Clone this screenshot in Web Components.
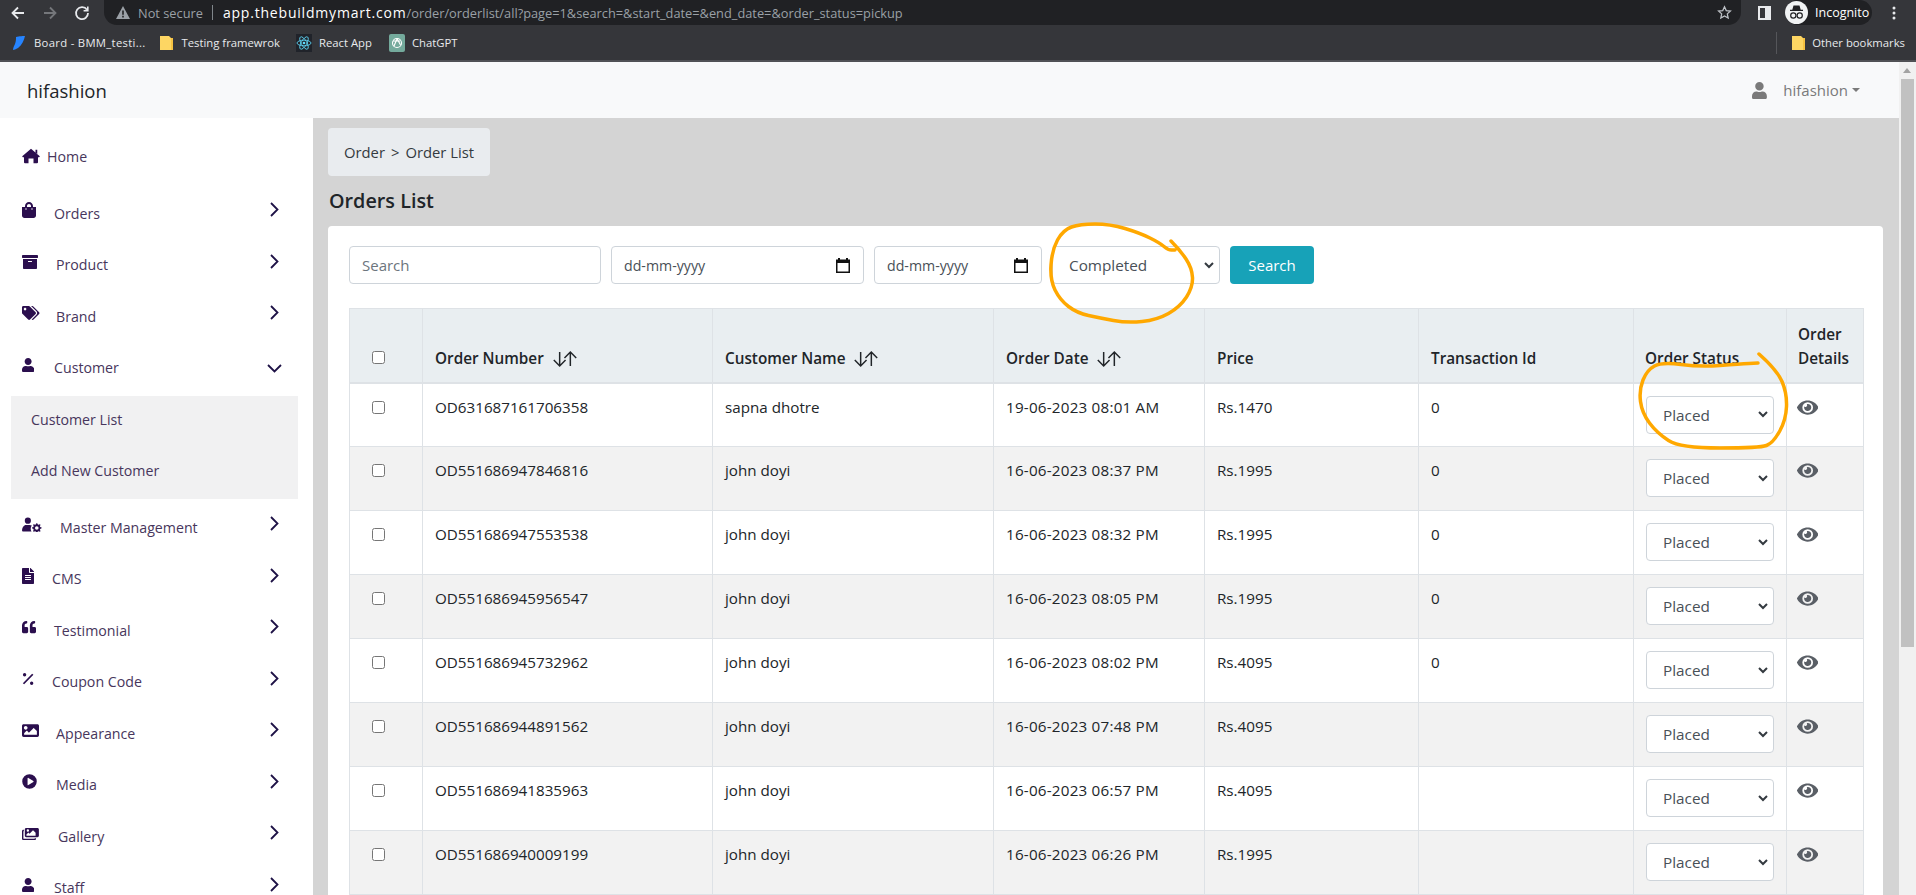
<!DOCTYPE html>
<html lang="en">
<head>
<meta charset="utf-8">
<title>Orders List</title>
<style>
html, body { margin: 0; height: 895px; overflow: hidden; background: #fff; font-family: "Open Sans", "Liberation Sans", sans-serif; font-size: 15px; color: #212529; }
#app-row { display: flex; height: 833px; }
#page { flex: 1; min-width: 0; display: flex; flex-direction: column; }
#page-body { flex: 1; display: flex; min-height: 0; }
</style>
</head>
<body>
<browser-chrome></browser-chrome>
<div id="app-row">
  <div id="page">
    <app-navbar brand="hifashion" account="hifashion"></app-navbar>
    <div id="page-body">
      <side-nav></side-nav>
      <orders-page></orders-page>
    </div>
  </div>
  <page-scrollbar></page-scrollbar>
</div>
<ink-marks></ink-marks>

<script>
// gear for the user-cog icon, 8 teeth round (cx, cy) with a hole
function gearPath(cx, cy, r, hole) {
    let d = '';
    for (let i = 0; i < 16; i++) {
        const rad = i % 2 == 0 ? r : r * 0.74;
        [-0.2, 0.2].forEach(off => {
            const a = (i + off) * Math.PI / 8;
            d += (d ? 'L' : 'M') + (cx + rad * Math.cos(a)).toFixed(1) + ' ' + (cy + rad * Math.sin(a)).toFixed(1);
        });
    }
    return d + `zM${cx - hole} ${cy}a${hole} ${hole} 0 1 0 ${hole * 2} 0a${hole} ${hole} 0 1 0 ${-hole * 2} 0z`;
}

// font awesome style glyphs, [viewBox width, path]
const ICONS = {
    home: [576, 'M288 24L560 256a24 24 0 0 1-16 42H512V456a32 32 0 0 1-32 32H368V336H208V488H96a32 32 0 0 1-32-32V298H32a24 24 0 0 1-16-42zM432 56h56V200l-56-48z'],
    bag: [448, 'M352 160v-32C352 57.42 294.579 0 224 0 153.42 0 96 57.42 96 128v32H0v272c0 44.183 35.817 80 80 80h288c44.183 0 80-35.817 80-80V160h-96zm-192-32c0-35.29 28.71-64 64-64s64 28.71 64 64v32H160v-32zm160 120c-13.255 0-24-10.745-24-24s10.745-24 24-24 24 10.745 24 24-10.745 24-24 24zm-192 0c-13.255 0-24-10.745-24-24s10.745-24 24-24 24 10.745 24 24-10.745 24-24 24z'],
    archive: [512, 'M32 448c0 17.7 14.3 32 32 32h384c17.7 0 32-14.3 32-32V160H32v288zm160-212c0-6.6 5.4-12 12-12h104c6.6 0 12 5.4 12 12v8c0 6.6-5.4 12-12 12H204c-6.6 0-12-5.4-12-12v-8zM480 32H32C14.3 32 0 46.3 0 64v48c0 8.8 7.2 16 16 16h480c8.8 0 16-7.2 16-16V64c0-17.7-14.3-32-32-32z'],
    tags: [640, 'M497.941 225.941L286.059 14.059A48 48 0 0 0 252.118 0H48C21.49 0 0 21.49 0 48v204.118a48 48 0 0 0 14.059 33.941l211.882 211.882c18.744 18.745 49.136 18.746 67.882 0l204.118-204.118c18.745-18.745 18.745-49.137 0-67.882zM112 160c-26.51 0-48-21.49-48-48s21.49-48 48-48 48 21.49 48 48-21.49 48-48 48zm513.941 133.823L421.823 497.941c-18.745 18.745-49.137 18.745-67.882 0l-.36-.36L527.64 323.522c16.999-16.999 26.36-39.6 26.36-63.64s-9.362-46.641-26.36-63.64L331.397 0h48.721a48 48 0 0 1 33.941 14.059l211.882 211.882c18.745 18.745 18.745 49.137 0 67.882z'],
    user: [448, 'M224 256c70.7 0 128-57.3 128-128S294.7 0 224 0 96 57.3 96 128s57.3 128 128 128zm89.6 32h-16.7c-22.2 10.2-46.9 16-72.9 16s-50.6-5.8-72.9-16h-16.7C60.2 288 0 348.2 0 422.4V464c0 26.5 21.5 48 48 48h352c26.5 0 48-21.5 48-48v-41.6c0-74.2-60.2-134.4-134.4-134.4z'],
    usercog: [680, 'M200 20a105 105 0 1 1 0 210 105 105 0 1 1 0-210zM140 270h120c30 0 55 8 75 20-24 30-38 68-38 110 0 36 10 68 28 96H30c-16 0-28-12-28-28 0-110 60-198 138-198z' + gearPath(505, 375, 165, 62)],
    file: [384, 'M224 136V0H24C10.7 0 0 10.7 0 24v464c0 13.3 10.7 24 24 24h336c13.3 0 24-10.7 24-24V160H248c-13.2 0-24-10.8-24-24zm64 236c0 6.6-5.4 12-12 12H108c-6.6 0-12-5.4-12-12v-8c0-6.6 5.4-12 12-12h168c6.6 0 12 5.4 12 12v8zm0-64c0 6.6-5.4 12-12 12H108c-6.6 0-12-5.4-12-12v-8c0-6.6 5.4-12 12-12h168c6.6 0 12 5.4 12 12v8zm0-72v8c0 6.6-5.4 12-12 12H108c-6.6 0-12-5.4-12-12v-8c0-6.6 5.4-12 12-12h168c6.6 0 12 5.4 12 12zm96-114.1v6.1H256V0h6.1c6.4 0 12.5 2.5 17 7l97.9 98c4.5 4.5 7 10.6 7 16.9z'],
    quote: [512, 'M464 256h-80v-64c0-35.3 28.7-64 64-64h8c13.3 0 24-10.7 24-24V56c0-13.3-10.7-24-24-24h-8c-88.4 0-160 71.6-160 160v240c0 26.5 21.5 48 48 48h128c26.5 0 48-21.5 48-48V304c0-26.5-21.5-48-48-48zm-288 0H96v-64c0-35.3 28.7-64 64-64h8c13.3 0 24-10.7 24-24V56c0-13.3-10.7-24-24-24h-8C71.6 32 0 103.6 0 192v240c0 26.5 21.5 48 48 48h128c26.5 0 48-21.5 48-48V304c0-26.5-21.5-48-48-48z'],
    percent: [448, 'M95 40a62 62 0 1 1 0 124 62 62 0 1 1 0-124zM353 348a62 62 0 1 1 0 124 62 62 0 1 1 0-124zM370 62l48 40L78 450l-48-40z'],
    image: [512, 'M464 448H48c-26.51 0-48-21.49-48-48V112c0-26.51 21.49-48 48-48h416c26.51 0 48 21.49 48 48v288c0 26.51-21.49 48-48 48zM112 120c-30.928 0-56 25.072-56 56s25.072 56 56 56 56-25.072 56-56-25.072-56-56-56zM64 384h384V272l-87.515-87.515c-4.686-4.686-12.284-4.686-16.971 0L208 320l-55.515-55.515c-4.686-4.686-12.284-4.686-16.971 0L64 336v48z'],
    play: [512, 'M256 8a248 248 0 1 0 0 496 248 248 0 1 0 0-496zM190 148c0-14 15-23 28-15l170 108c12 7 12 23 0 30L218 379c-13 8-28-1-28-15z'],
    images: [576, 'M480 416v16c0 26.51-21.49 48-48 48H48c-26.51 0-48-21.49-48-48V176c0-26.51 21.49-48 48-48h16v48H54a6 6 0 0 0-6 6v244a6 6 0 0 0 6 6h372a6 6 0 0 0 6-6v-10h48zm48-352H144c-26.51 0-48 21.49-48 48v224c0 26.51 21.49 48 48 48h384c26.51 0 48-21.49 48-48V112c0-26.51-21.49-48-48-48zM200 112a40 40 0 1 1 0 80 40 40 0 1 1 0-80zM152 336v-48l64-64 40 40 120-120 88 88v104z'],
    eye: [576, 'M572.52 241.4C518.29 135.59 410.93 64 288 64S57.68 135.64 3.48 241.41a32.4 32.4 0 0 0 0 29.2C57.71 376.41 165.07 448 288 448s230.32-71.64 284.52-177.41a32.4 32.4 0 0 0 0-29.19zM288 400a144 144 0 1 1 144-144 143.93 143.93 0 0 1-144 144zm0-240a95.31 95.31 0 0 0-25.31 3.79 47.85 47.85 0 0 1-66.9 66.9A95.78 95.78 0 1 0 288 160z']
};

function iconSvg(name, height) {
    const ic = ICONS[name];
    const w = ic[0] / 512 * height;
    return `<svg width="${w}" height="${height}" viewBox="0 0 ${ic[0]} 512" fill="currentColor" fill-rule="evenodd"><path d="${ic[1]}"/></svg>`;
}

class BrowserChrome extends HTMLElement {
    connectedCallback() {
        const root = this.attachShadow({ mode: 'open' });
        root.innerHTML = `<style>
            :host { display: block; height: 62px; background: #35363a; color: #e8eaed; font-family: "Open Sans", "Liberation Sans", sans-serif; overflow: hidden; }
            .top { height: 25px; display: flex; align-items: center; }
            .nav { width: 104px; flex: none; display: flex; align-items: center; padding-left: 10px; gap: 16px; box-sizing: border-box; }
            .omni { width: 1637px; flex: none; height: 25px; background: #202124; border-radius: 0 0 13px 13px; display: flex; align-items: center; box-sizing: border-box; padding-left: 12px; font-size: 12.800px; color: #9aa0a6; white-space: nowrap; }
            .sep { width: 1px; height: 15px; background: #80868b; margin: 0 10px 0 9px; }
            .host { color: #fff; font-size: 14px; letter-spacing: .8px; }
            .warn { margin-right: 8px; display: block; }
            .star { margin-left: auto; margin-right: 9px; display: block; }
            .tools { flex: 1; display: flex; align-items: center; }
            .panel { margin-left: 17px; display: block; }
            .pill { margin-left: 14px; height: 25px; width: 87px; border-radius: 13px; background: #202124; display: flex; align-items: center; gap: 7px; box-sizing: border-box; font-size: 12.500px; color: #fff; }
            .dots { margin-left: 20px; display: block; }
            .marks { height: 35px; display: flex; align-items: center; font-size: 11.300px; color: #e8eaed; padding-left: 11px; white-space: nowrap; border-bottom: 2px solid #505155; box-sizing: content-box; }
            .bm { display: flex; align-items: center; gap: 7px; }
            .first span { letter-spacing: .3px; }
            .folder { margin-left: 14px; gap: 9px; }
            .react { margin-left: 16px; gap: 7px; }
            .gpt { margin-left: 17px; gap: 7px; }
            .other { margin-left: auto; margin-right: 11px; gap: 7px; }
            .rule { width: 1px; height: 22px; background: #55565a; margin-right: 8px; }
        </style>
        <div class="top">
            <div class="nav">
                <svg width="16" height="16" viewBox="0 0 16 16" fill="none" stroke="#e8eaed" stroke-width="1.8"><path d="M14 8H2.5M8 2.5 2.5 8 8 13.5"/></svg>
                <svg width="16" height="16" viewBox="0 0 16 16" fill="none" stroke="#75777b" stroke-width="1.8"><path d="M2 8h11.5M8 2.5 13.5 8 8 13.5"/></svg>
                <svg width="16" height="16" viewBox="0 0 16 16" fill="none" stroke="#e8eaed" stroke-width="1.8"><path d="M13 4.8A6 6 0 1 0 14 8"/><path d="M13.8 1.5v4.2H9.6" stroke-width="1.6"/></svg>
            </div>
            <div class="omni">
                <svg class="warn" width="14" height="13" viewBox="0 0 14 13"><path fill="#9aa0a6" d="M7 0 14 13H0zM6.2 4.5v4.3h1.6V4.5zM6.2 9.8v1.6h1.6V9.8z" fill-rule="evenodd"/></svg>
                <span>Not secure</span><span class="sep"></span><span><span class="host">app.thebuildmymart.com</span>/order/orderlist/all?page=1&amp;search=&amp;start_date=&amp;end_date=&amp;order_status=pickup</span>
                <svg class="star" width="15" height="15" viewBox="0 0 24 24" fill="none" stroke="#bdc1c6" stroke-width="2"><path d="M12 2.8l2.8 6.2 6.7.7-5 4.500 1.400 6.600-5.900-3.400-5.900 3.400 1.400-6.600-5-4.500 6.700-.7z"/></svg>
            </div>
            <div class="tools">
                <svg class="panel" width="13" height="14" viewBox="0 0 13 14"><path fill="#e8eaed" d="M0 0h13v14H0zM2 2v10h5V2z" fill-rule="evenodd"/></svg>
                <div class="pill">
                    <svg width="23" height="23" viewBox="0 0 23 23"><circle cx="11.500" cy="11.500" r="11.500" fill="#f1f3f4"/><path fill="#202124" d="M8.500 4.500h6l1.200 4.200H18v1.200H5V8.700h2.300z"/><circle cx="8.300" cy="14.500" r="2.600" fill="none" stroke="#202124" stroke-width="1.200"/><circle cx="14.700" cy="14.500" r="2.600" fill="none" stroke="#202124" stroke-width="1.200"/></svg>
                    <span>Incognito</span>
                </div>
                <svg class="dots" width="4" height="14" viewBox="0 0 4 14" fill="#e8eaed"><circle cx="2" cy="2" r="1.500"/><circle cx="2" cy="7" r="1.500"/><circle cx="2" cy="12" r="1.500"/></svg>
            </div>
        </div>
        <div class="marks">
            <div class="bm first"><svg width="16" height="16" viewBox="0 0 16 16"><path fill="#2684ff" d="M5 2c3-1 8-1 9-1-1 4-3 9-7 12-2 1-4 2-5 2 0-2 1-4 2-6 1-3 1-5 1-7z"/></svg><span>Board - BMM_testi...</span></div>
            <div class="bm folder"><svg width="13" height="16" viewBox="0 0 13 16"><path fill="#fdd663" d="M0 1h9l2 2v12H0z"/><path fill="#f5c242" d="M11 3h2v12h-2z"/></svg><span>Testing framewrok</span></div>
            <div class="bm react"><svg width="16" height="18" viewBox="0 0 16 18"><rect width="16" height="18" fill="#20232a"/><g fill="none" stroke="#61dafb" stroke-width=".8"><ellipse cx="8" cy="9" rx="7" ry="2.800"/><ellipse cx="8" cy="9" rx="7" ry="2.800" transform="rotate(60 8 9)"/><ellipse cx="8" cy="9" rx="7" ry="2.800" transform="rotate(120 8 9)"/></g><circle cx="8" cy="9" r="1.300" fill="#61dafb"/></svg><span>React App</span></div>
            <div class="bm gpt"><svg width="16" height="18" viewBox="0 0 16 18"><rect width="16" height="18" rx="2" fill="#74aa9c"/><g fill="none" stroke="#fff" stroke-width="1.100"><circle cx="8" cy="9" r="4.500"/><path d="M8 4.500 11.500 11M4 7l7 0M5 12l3-7"/></g></svg><span>ChatGPT</span></div>
            <div class="bm other"><span class="rule"></span><svg width="13" height="16" viewBox="0 0 13 16"><path fill="#fdd663" d="M0 1h9l2 2v12H0z"/><path fill="#f5c242" d="M11 3h2v12h-2z"/></svg><span>Other bookmarks</span></div>
        </div>`;
    }
}
customElements.define('browser-chrome', BrowserChrome);

class AppNavbar extends HTMLElement {
    connectedCallback() {
        const root = this.attachShadow({ mode: 'open' });
        root.innerHTML = `<style>
            :host { display: flex; flex: none; height: 56px; background: #f8f9fa; align-items: center; justify-content: space-between; padding: 0 39px 0 27px; font-size: 15px; }
            .brand { font-size: 18.500px; color: #212529; }
            .who { display: flex; align-items: center; color: #7a7a7a; }
            .who svg { display: block; margin-right: 16px; }
            .caret { width: 0; height: 0; border: 4px solid transparent; border-top-color: #7a7a7a; border-bottom: 0; margin-left: 4px; }
        </style>
        <span class="brand">${this.getAttribute('brand')}</span>
        <span class="who">${iconSvg('user', 17)}<span>${this.getAttribute('account')}</span><span class="caret"></span></span>`;
    }
}
customElements.define('app-navbar', AppNavbar);

class NavItem extends HTMLElement {
    connectedCallback() {
        const chevron = this.getAttribute('chevron');
        const root = this.attachShadow({ mode: 'open' });
        let arrow = '';
        if (chevron == 'right') {
            arrow = '<svg class="arrow" width="9" height="15" viewBox="0 0 9 15" fill="none" stroke="#1e1246" stroke-width="1.800"><path d="M1 1l6.500 6.500L1 14"/></svg>';
        } else if (chevron == 'down') {
            arrow = '<svg class="arrow down" width="15" height="9" viewBox="0 0 15 9" fill="none" stroke="#1e1246" stroke-width="1.800"><path d="M1 1l6.500 6.500L14 1"/></svg>';
        }
        const raised = this.hasAttribute('level') ? '0' : '6px';
        root.innerHTML = `<style>
            :host { display: block; }
            .row { height: var(--row, 51.500px); display: flex; align-items: center; position: relative; padding-left: 22px; color: #47365c; }
            .ic { width: ${this.getAttribute('text-at') - 22}px; flex: none; color: #2b0f4e; margin-bottom: ${raised}; display: block; }
            .ic svg { display: block; }
            .arrow { position: absolute; left: 270px; top: calc(50% - 11px); display: block; }
            .arrow.down { left: 267px; top: calc(50% - 4px); }
        </style>
        <div class="row"><span class="ic">${iconSvg(this.getAttribute('icon'), +this.getAttribute('size') || 15)}</span><span><slot></slot></span>${arrow}</div>`;
    }
}
customElements.define('nav-item', NavItem);

class SideNav extends HTMLElement {
    connectedCallback() {
        const root = this.attachShadow({ mode: 'open' });
        const top = [['bag', 54, 'Orders', 16], ['archive', 56, 'Product', 16], ['tags', 56, 'Brand', 14], ['user', 54, 'Customer', 14]];
        const rest = [['usercog', 60, 'Master Management', 15], ['file', 52, 'CMS', 16], ['quote', 54, 'Testimonial', 14], ['percent', 52, 'Coupon Code', 14], ['image', 56, 'Appearance', 17], ['play', 56, 'Media', 15], ['images', 58, 'Gallery', 15], ['user', 54, 'Staff', 14]];
        const item = (it, chev) => `<nav-item icon="${it[0]}" text-at="${it[1]}" size="${it[3] || 15}" chevron="${chev}">${it[2]}</nav-item>`;
        root.innerHTML = `<style>
            :host { display: block; width: 313px; flex: none; background: #fff; padding-top: 10px; box-sizing: border-box; overflow: hidden; font-size: 14.200px; }
            .home { --row: 56px; margin-bottom: 3.250px; }
            .sub { margin: 2.750px 15px 2.250px 11px; background: #f1f1f2; padding: 1px 0 4.750px 20px; color: #47365c; display: flex; flex-direction: column; gap: 5.250px; }
            .sub span { height: 46px; line-height: 46px; display: block; }
        </style>
        <nav-item class="home" icon="home" text-at="47" size="16" level="0">Home</nav-item>
        ${top.map((it, i) => item(it, i == 3 ? 'down' : 'right')).join('')}
        <div class="sub"><span>Customer List</span><span>Add New Customer</span></div>
        ${rest.map(it => item(it, 'right')).join('')}`;
    }
}
customElements.define('side-nav', SideNav);

class FormField extends HTMLElement {
    connectedCallback() {
        const kind = this.getAttribute('kind');
        const root = this.attachShadow({ mode: 'open' });
        let tail = '';
        if (kind == 'date') {
            tail = '<svg width="14" height="15" viewBox="0 0 14 15"><path fill="#111" d="M2 0h2v1.500h6V0h2v1.500h2V15H0V1.500h2zM1.500 5v8.500h11V5z" fill-rule="evenodd"/></svg>';
        } else if (kind == 'select') {
            tail = '<svg width="10" height="7" viewBox="0 0 10 7" fill="none" stroke="#343a40" stroke-width="2"><path d="M1 1l4 4 4-4"/></svg>';
        }
        root.innerHTML = `<style>
            :host { display: flex; box-sizing: border-box; height: 38px; align-items: center; justify-content: space-between; background: #fff; border: 1px solid #ced4da; border-radius: 4px; font-size: 15px; color: #6c757d; padding: 0 9px 0 12px; white-space: nowrap; flex: none; }
            :host([kind=select]) { color: #495057; padding: 0 5px 0 var(--pad, 16px); font-size: 15.300px; }
            :host([kind=date]) { color: #495057; padding-right: 13px; font-size: 14.200px; }
            svg { display: block; flex: none; }
        </style><span><slot></slot></span>${tail}`;
    }
}
customElements.define('form-field', FormField);

class OrdersTable extends HTMLElement {
    connectedCallback() {
        const rows = [
            ['OD631687161706358', 'sapna dhotre', '19-06-2023 08:01 AM', 'Rs.1470', '0'],
            ['OD551686947846816', 'john doyi', '16-06-2023 08:37 PM', 'Rs.1995', '0'],
            ['OD551686947553538', 'john doyi', '16-06-2023 08:32 PM', 'Rs.1995', '0'],
            ['OD551686945956547', 'john doyi', '16-06-2023 08:05 PM', 'Rs.1995', '0'],
            ['OD551686945732962', 'john doyi', '16-06-2023 08:02 PM', 'Rs.4095', '0'],
            ['OD551686944891562', 'john doyi', '16-06-2023 07:48 PM', 'Rs.4095', ''],
            ['OD551686941835963', 'john doyi', '16-06-2023 06:57 PM', 'Rs.4095', ''],
            ['OD551686940009199', 'john doyi', '16-06-2023 06:26 PM', 'Rs.1995', '']
        ];
        const sort = '<svg class="sort" width="26" height="16" viewBox="0 0 24 15" fill="none" stroke="#212529" stroke-width="1.400"><path d="M7 1v13M1.500 8.500 7 14l5.500-5.500M17 14V1M11.500 6.500 17 1l5.500 5.500"/></svg>';
        const widths = [73, 290, 281, 211, 214, 215, 153, 77];
        const root = this.attachShadow({ mode: 'open' });
        root.innerHTML = `<style>
            :host { display: block; font-size: 15.200px; color: #212529; }
            table { border-collapse: collapse; table-layout: fixed; width: 1514px; }
            th, td { border: 1px solid #dee2e6; padding: 12px; text-align: left; vertical-align: top; line-height: 24px; box-sizing: border-box; }
            th { background: #e9eef1; vertical-align: bottom; border-bottom-width: 2px; font-weight: 600; height: 74px; font-size: 15.300px; }
            thead tr { height: 74px; }
            th:nth-child(n+7), td:nth-child(n+7) { padding-left: 11px; padding-right: 9px; }
            td { height: 64px; padding-top: 11px; }
            td:nth-child(4) { letter-spacing: .22px; }
            tbody tr:nth-child(even) { background: #f2f2f2; }
            .sort { vertical-align: -3px; margin-left: 4px; }
            .box { margin: 0 0 0 10px; width: 13px; height: 13px; display: block; }
            th .box { margin-bottom: 6px; margin-top: 0; }
            td .box { margin-top: 6px; }
            form-field { width: 128px; margin-left: 1px; }
            td.st { padding-top: 12px; padding-bottom: 0; }
            .eye { color: #5a5f66; display: block; padding-top: 3px; margin-left: -1px; }
            .eye svg { display: block; }
        </style>
        <table>
            <colgroup>${widths.map(w => `<col style="width:${w}px">`).join('')}</colgroup>
            <thead><tr>
                <th><input type="checkbox" class="box"></th>
                <th>Order Number ${sort}</th>
                <th>Customer Name ${sort}</th>
                <th>Order Date ${sort}</th>
                <th>Price</th>
                <th>Transaction Id</th>
                <th>Order Status</th>
                <th>Order Details</th>
            </tr></thead>
            <tbody>${rows.map(r => `<tr>
                <td><input type="checkbox" class="box"></td>
                ${r.map(c => `<td>${c}</td>`).join('')}
                <td class="st"><form-field kind="select">Placed</form-field></td>
                <td><span class="eye">${iconSvg('eye', 19)}</span></td>
            </tr>`).join('')}</tbody>
        </table>`;
    }
}
customElements.define('orders-table', OrdersTable);

class OrdersPage extends HTMLElement {
    connectedCallback() {
        const root = this.attachShadow({ mode: 'open' });
        root.innerHTML = `<style>
            :host { display: block; flex: 1; min-width: 0; background: #d4d4d4; padding: 10px 16px 0 15px; box-sizing: border-box; overflow: hidden; }
            .crumb { display: inline-block; height: 48px; line-height: 48px; padding: 0 16px; background: #e9ecef; border-radius: 4px; font-size: 14.800px; color: #343a40; }
            .crumb i { font-style: normal; margin: 0 6px; }
            h1 { margin: 11px 0 11px 1px; font-size: 19.800px; font-weight: 600; line-height: 28px; color: #212529; }
            .card { background: #fff; border-radius: 4px 4px 0 0; padding: 20px 20px 0 21px; height: 700px; box-sizing: border-box; }
            .filters { display: flex; gap: 10px; margin-bottom: 24px; }
            .btn { width: 84px; height: 38px; line-height: 38px; text-align: center; background: #17a2b8; color: #fff; border-radius: 4px; font-size: 15px; flex: none; }
        </style>
        <div class="crumb">Order<i>&gt;</i>Order List</div>
        <h1>Orders List</h1>
        <div class="card">
            <div class="filters">
                <form-field style="width:252px">Search</form-field>
                <form-field kind="date" style="width:253px">dd-mm-yyyy</form-field>
                <form-field kind="date" style="width:168px">dd-mm-yyyy</form-field>
                <form-field kind="select" style="width:168px">Completed</form-field>
                <div class="btn">Search</div>
            </div>
            <orders-table></orders-table>
        </div>`;
    }
}
customElements.define('orders-page', OrdersPage);

class PageScrollbar extends HTMLElement {
    connectedCallback() {
        const root = this.attachShadow({ mode: 'open' });
        root.innerHTML = `<style>
            :host { display: block; width: 17px; flex: none; background: #f1f1f1; position: relative; }
            .up { width: 0; height: 0; border: 4px solid transparent; border-bottom: 5px solid #a3a3a3; border-top: 0; position: absolute; left: 4px; top: 6px; }
            .thumb { position: absolute; left: 2px; width: 13px; top: 17px; height: 568px; background: #c1c1c1; }
        </style><div class="up"></div><div class="thumb"></div>`;
    }
}
customElements.define('page-scrollbar', PageScrollbar);

// the orange pen marks drawn on the screenshot
class InkMarks extends HTMLElement {
    smooth(pts) {
        let d = 'M' + pts[0].join(' ');
        for (let i = 1; i < pts.length - 1; i++) {
            const mx = (pts[i][0] + pts[i + 1][0]) / 2, my = (pts[i][1] + pts[i + 1][1]) / 2;
            d += ` Q${pts[i][0]} ${pts[i][1]} ${mx} ${my}`;
        }
        return d + ' L' + pts[pts.length - 1].join(' ');
    }
    connectedCallback() {
        const a = [[1171, 241], [1180, 250], [1192, 268], [1193, 287], [1180, 307], [1157, 320], [1127, 323], [1100, 318], [1077, 313], [1060, 300], [1050, 280], [1052, 250], [1063, 230], [1080, 224], [1110, 224], [1140, 233], [1160, 243], [1168, 250], [1175, 250]];
        const b = [[1759, 354], [1777, 370], [1787, 393], [1786, 420], [1773, 443], [1760, 448], [1680, 448], [1657, 433], [1642, 413], [1639, 390], [1647, 370], [1662, 362], [1700, 367], [1740, 364], [1758, 363]];
        const root = this.attachShadow({ mode: 'open' });
        root.innerHTML = `<style>
            :host { position: absolute; left: 0; top: 0; width: 1916px; height: 895px; pointer-events: none; }
            svg { display: block; }
        </style>
        <svg width="1916" height="895" fill="none" stroke="#ffa800" stroke-width="3.500" stroke-linecap="round" stroke-linejoin="round">
            <path d="${this.smooth(a)}"/><path d="${this.smooth(b)}"/>
        </svg>`;
    }
}
customElements.define('ink-marks', InkMarks);
</script>
</body>
</html>
